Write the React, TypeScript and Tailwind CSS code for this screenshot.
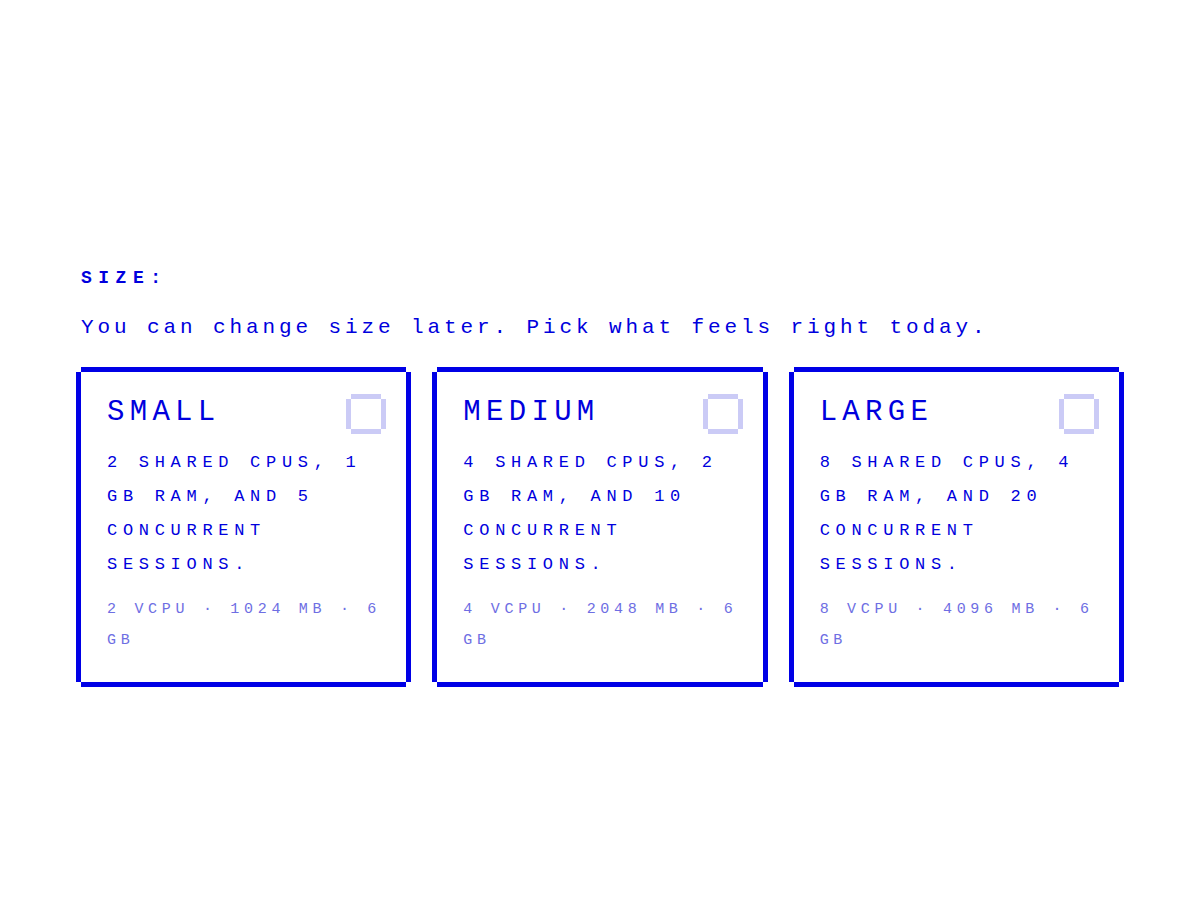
const plans = [
  {
    name: 'SMALL',
    blurb: '2 shared CPUs, 1 GB RAM, and 5 concurrent sessions.',
    specs: '2 vCPU · 1024 MB · 6 GB',
  },
  {
    name: 'MEDIUM',
    blurb: '4 shared CPUs, 2 GB RAM, and 10 concurrent sessions.',
    specs: '4 vCPU · 2048 MB · 6 GB',
  },
  {
    name: 'LARGE',
    blurb: '8 shared CPUs, 4 GB RAM, and 20 concurrent sessions.',
    specs: '8 vCPU · 4096 MB · 6 GB',
  },
]

// pixel-style frame: four offset shadows, corners left open
const frame =
  'shadow-[0_-5px_0_0_#0000e6,0_5px_0_0_#0000e6,-5px_0_0_0_#0000e6,5px_0_0_0_#0000e6]'
const boxFrame =
  'shadow-[0_-5px_0_0_#cbcbf6,0_5px_0_0_#cbcbf6,-5px_0_0_0_#cbcbf6,5px_0_0_0_#cbcbf6]'

function PlanCard({ plan }: { plan: (typeof plans)[number] }) {
  return (
    <button type="button" className={`flex flex-col items-stretch bg-white pl-[26px] pr-[20px] pt-[23px] pb-[26px] text-left ${frame}`}>
      <div className="flex items-center justify-between">
        <span className="text-[29px] leading-[36px] tracking-[5.3px] text-[#0000dd]">{plan.name}</span>
        <span className={`mr-[5px] mt-[2px] h-[30px] w-[30px] shrink-0 bg-white ${boxFrame}`} />
      </div>
      <p className="mt-[15px] text-[17px] leading-[34px] tracking-[5.7px] uppercase text-[#0000dd]">
        {plan.blurb}
      </p>
      <p className="mt-[12px] text-[15px] leading-[31px] tracking-[4.7px] uppercase text-[#6e6ee3]">
        {plan.specs}
      </p>
    </button>
  )
}

export default function App() {
  return (
    <div
      className="min-h-screen bg-white pt-[266px]"
      style={{ fontFamily: '"Liberation Mono", "DejaVu Sans Mono", monospace' }}
    >
      <div className="mx-auto w-[1038px]">
        <h2 className="text-[18px] leading-[24px] font-bold tracking-[6.5px] text-[#0000dd]">SIZE:</h2>
        <p className="mt-[24px] text-[21px] leading-[28px] tracking-[3.9px] text-[#0000dd]">
          You can change size later. Pick what feels right today.
        </p>
        <div className="mt-[30px] grid grid-cols-3 gap-[31px]">
          {plans.map((p) => (
            <PlanCard key={p.name} plan={p} />
          ))}
        </div>
      </div>
    </div>
  )
}
